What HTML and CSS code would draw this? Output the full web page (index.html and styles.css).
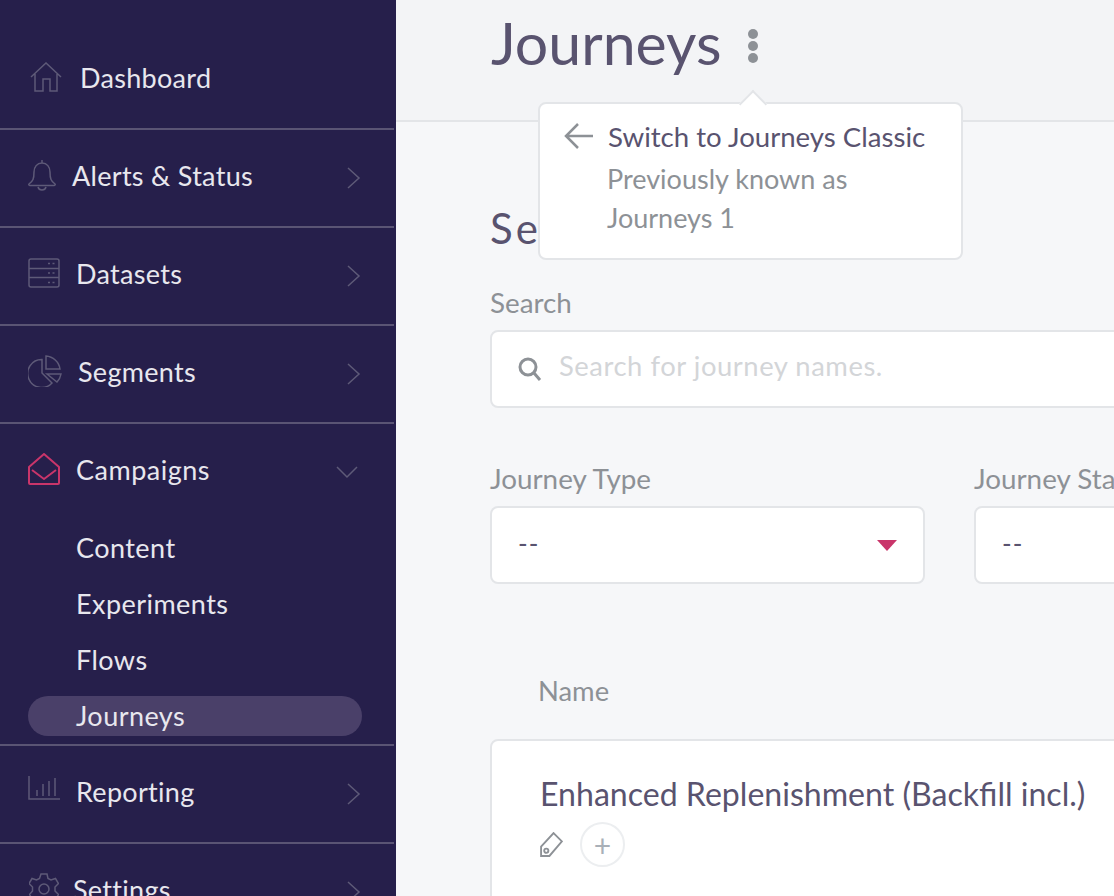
FILE: index.html
```html
<!DOCTYPE html>
<html lang="en">
<head>
    <meta charset="UTF-8">
    <title>Journeys</title>
    <link rel="stylesheet" href="styles.css">
</head>
<body>
    <div class="app">
        <nav class="sidebar">
            <a class="nav-row">
                <svg class="nav-icon icon-home" viewBox="0 0 32 30"><path d="M1 15 16 1l15 14M5 12v17h8V17h7v12h7V12"/></svg>
                <span class="nav-label">Dashboard</span>
            </a>
            <a class="nav-row">
                <svg class="nav-icon icon-bell" viewBox="0 0 28 32"><path d="M14 1v3M14 4c-5 0-8 4-8 9 0 7-1 9-5 12-.5.6 0 1.500 1 1.500h24c1 0 1.500-.9 1-1.500-4-3-5-5-5-12 0-5-3-9-8-9ZM10 28c1 4 7 4 8 0"/></svg>
                <span class="nav-label">Alerts &amp; Status</span>
                <svg class="chevron" viewBox="0 0 14 22"><path d="M1 1l11 10L1 21"/></svg>
            </a>
            <a class="nav-row">
                <svg class="nav-icon icon-data" viewBox="0 0 32 30"><rect x="1" y="1" width="30" height="28" rx="2"/><path d="M1 10.500h30M1 19.500h30"/><path class="dots" d="M20 5.500h2M24.500 5.500h2M20 15h2M24.500 15h2M20 24.500h2M24.500 24.500h2"/></svg>
                <span class="nav-label">Datasets</span>
                <svg class="chevron" viewBox="0 0 14 22"><path d="M1 1l11 10L1 21"/></svg>
            </a>
            <a class="nav-row">
                <svg class="nav-icon icon-pie" viewBox="0 0 34 32"><path d="M14 4.500A14 14 0 1 0 24 28l-10-10ZM18 1c7 .5 13 6 14 13H18ZM19 19h14c-.5 3-2 6-4 8Z"/></svg>
                <span class="nav-label">Segments</span>
                <svg class="chevron" viewBox="0 0 14 22"><path d="M1 1l11 10L1 21"/></svg>
            </a>
            <div class="nav-group">
                <a class="nav-row nav-row-open">
                    <svg class="nav-icon icon-mail" viewBox="0 0 32 32"><path d="M1 14 16 1l15 13v16a1 1 0 0 1-1 1H2a1 1 0 0 1-1-1ZM4 17l12 9 12-9"/></svg>
                    <span class="nav-label">Campaigns</span>
                    <svg class="chevron-down" viewBox="0 0 22 14"><path d="M1 1l10 10L21 1"/></svg>
                </a>
                <ul class="subnav">
                    <li>Content</li>
                    <li>Experiments</li>
                    <li>Flows</li>
                    <li class="active">Journeys</li>
                </ul>
            </div>
            <a class="nav-row">
                <svg class="nav-icon icon-report" viewBox="0 0 32 24"><path d="M1 0v23h31M9 20v-6M15 20V8M21 20V5M27 20V2"/></svg>
                <span class="nav-label">Reporting</span>
                <svg class="chevron" viewBox="0 0 14 22"><path d="M1 1l11 10L1 21"/></svg>
            </a>
            <a class="nav-row">
                <svg class="nav-icon icon-gear" viewBox="0 0 30 32"><circle cx="15" cy="16" r="5"/><path d="M12 1h6l1 4.500 3 1.500 4.500-1.500 3 5-3.500 3.500v4l3.500 3.500-3 5-4.500-1.500-3 1.500-1 4.500h-6l-1-4.500-3-1.500-4.500 1.500-3-5L3.500 18v-4L0 10.500l3-5L7.500 7l3-1.500Z"/></svg>
                <span class="nav-label">Settings</span>
                <svg class="chevron" viewBox="0 0 14 22"><path d="M1 1l11 10L1 21"/></svg>
            </a>
        </nav>

        <main class="main">
            <header class="page-header">
                <h1>Journeys</h1>
                <div class="kebab"><span></span><span></span><span></span></div>
            </header>

            <div class="popover">
                <div class="popover-title">
                    <svg class="back-arrow" viewBox="0 0 30 28"><path d="M29 14H2M14 2 2 14l12 12"/></svg>
                    <span>Switch to Journeys Classic</span>
                </div>
                <p>Previously known as<br>Journeys 1</p>
            </div>

            <section class="content">
                <h2>Search</h2>
                <label class="field-label">Search</label>
                <div class="input search-input">
                    <svg class="search-icon" viewBox="0 0 24 24"><circle cx="10" cy="10" r="8"/><path d="m16 16 6 7"/></svg>
                    <span class="placeholder">Search for journey names.</span>
                </div>

                <div class="filters">
                    <div>
                        <label class="field-label">Journey Type</label>
                        <div class="input select">
                            <span>--</span>
                            <i class="caret"></i>
                        </div>
                    </div>
                    <div>
                        <label class="field-label">Journey Status</label>
                        <div class="input select">
                            <span>--</span>
                            <i class="caret"></i>
                        </div>
                    </div>
                </div>

                <div class="table-head">Name</div>
                <div class="card">
                    <div class="card-title">Enhanced Replenishment (Backfill incl.)</div>
                    <div class="tags">
                        <svg class="tag-icon" viewBox="0 0 22 24"><path d="M13 1l8 8L9 23H1v-9Z"/><circle cx="6" cy="18" r="2"/></svg>
                        <span class="add-tag">+</span>
                    </div>
                </div>
            </section>
        </main>
    </div>
</body>
</html>
```

FILE: styles.css
```css
* {
    box-sizing: border-box;
}

html,
body {
    margin: 0;
    height: 100%;
    overflow: hidden;
}

body {
    font-family: Lato, "Open Sans", sans-serif;
    background-color: #f6f7f9;
}

.app {
    display: flex;
    width: 1114px;
    height: 896px;
    overflow: hidden;
}

/* Sidebar */
.sidebar {
    flex: 0 0 396px;
    padding: 32px 2px 0 0;
    background-color: #261f4b;
    color: #e8e7ee;
}

.nav-row {
    display: flex;
    align-items: center;
    height: 98px;
    padding: 0 0 2px 28px;
    font-size: 27px;
    letter-spacing: 0.3px;
    border-bottom: 2px solid #5a5474;
}

.nav-group {
    border-bottom: 2px solid #5a5474;
    height: 322px;
}

.nav-row-open {
    border-bottom: none;
    height: 94px;
    padding-bottom: 0;
    letter-spacing: 0.5px;
}

.nav-icon {
    flex: none;
    fill: none;
    stroke: #5e5a78;
    stroke-width: 1.5;
}

.icon-home { width: 32px; height: 30px; margin: -4px 18px 0 2px; }
.icon-bell { width: 28px; height: 32px; margin: -4px 16px 0 0; }
.icon-data { width: 32px; height: 30px; margin: -4px 16px 0 0; }
.icon-pie { width: 34px; height: 32px; margin: -4px 16px 0 0; }
.icon-mail { width: 32px; height: 32px; margin: -4px 16px 0 0; stroke: #c9356a; stroke-width: 2; stroke-linejoin: round; }
.icon-report { width: 32px; height: 24px; margin: -10px 16px 0 0; }
.icon-gear { width: 30px; height: 32px; margin: -4px 14px 0 1px; }

.nav-label {
    margin-top: -4px;
}

.chevron {
    width: 14px;
    height: 22px;
    margin: 2px 33px 0 auto;
    fill: none;
    stroke: #5e5a78;
    stroke-width: 1.5;
}

.chevron-down {
    width: 22px;
    height: 14px;
    margin: 4px 36px 0 auto;
    fill: none;
    stroke: #5e5a78;
    stroke-width: 1.5;
}

.subnav {
    list-style: none;
    margin: 0;
    padding: 2px 32px 0 28px;
    font-size: 27px;
    letter-spacing: 0.45px;
}

.subnav li {
    height: 56px;
    padding-left: 48px;
    line-height: 56px;
}

.subnav li.active {
    height: 40px;
    margin-top: 8px;
    line-height: 40px;
    border-radius: 20px;
    background-color: #4a4069;
}

/* Main area */
.main {
    position: relative;
    flex: 1;
    min-width: 0;
    overflow: hidden;
}

.page-header {
    display: flex;
    align-items: center;
    height: 122px;
    padding: 0 0 20px 95px;
    background-color: #f3f4f6;
    border-bottom: 2px solid #e3e5e8;
}

.page-header h1 {
    margin: -16px 0 0;
    font-size: 59px;
    font-weight: 400;
    color: #59536f;
}

.kebab {
    display: flex;
    flex-direction: column;
    gap: 2px;
    margin: -8px 0 0 27px;
}

.kebab span {
    width: 10px;
    height: 10px;
    border-radius: 50%;
    background-color: #8d9196;
}

.popover {
    position: absolute;
    left: 142px;
    top: 102px;
    width: 425px;
    height: 158px;
    padding: 16px 24px;
    background-color: #fff;
    border: 2px solid #e3e5e8;
    border-radius: 8px;
}

.popover::before {
    content: "";
    position: absolute;
    left: 203px;
    top: -10px;
    width: 18px;
    height: 18px;
    background-color: #fff;
    border-top: 2px solid #e3e5e8;
    border-left: 2px solid #e3e5e8;
    transform: rotate(45deg);
}

.popover-title {
    display: flex;
    align-items: center;
    gap: 14px;
    height: 32px;
    font-size: 27.6px;
    color: #59536f;
}

.back-arrow {
    flex: none;
    width: 30px;
    height: 28px;
    fill: none;
    stroke: #8d9196;
    stroke-width: 2.5;
}

.popover p {
    margin: 7px 0 0 43px;
    font-size: 27px;
    line-height: 39px;
    color: #8d9196;
}

.content {
    padding: 0 0 0 94px;
    width: 1200px;
}

.content h2 {
    margin: 83px 0 0;
    font-size: 42px;
    line-height: 46px;
    font-weight: 400;
    letter-spacing: 3px;
    color: #59536f;
}

.field-label {
    display: block;
    font-size: 27.8px;
    line-height: 34px;
    color: #8d9196;
}

.content h2 + .field-label {
    margin-top: 35px;
}

.input {
    display: flex;
    align-items: center;
    height: 78px;
    margin-top: 10px;
    padding: 0 28px 0 26px;
    background-color: #fff;
    border: 2px solid #e3e5e8;
    border-radius: 8px;
}

.search-icon {
    width: 24px;
    height: 24px;
    margin-right: 17px;
    fill: none;
    stroke: #8d9196;
    stroke-width: 3;
}

.placeholder {
    margin-top: -8px;
    font-size: 27.4px;
    letter-spacing: 0.55px;
    color: #d3d5d8;
}

.filters {
    display: grid;
    grid-template-columns: 435px 435px;
    gap: 49px;
    margin-top: 54px;
}

.select {
    justify-content: space-between;
    font-size: 26px;
    letter-spacing: 1px;
    color: #59536f;
}

.select span {
    margin-top: -4px;
}

.caret {
    width: 0;
    height: 0;
    margin-right: -2px;
    border-left: 10px solid transparent;
    border-right: 10px solid transparent;
    border-top: 11px solid #c9356a;
}

.table-head {
    margin-top: 90px;
    padding-left: 48px;
    font-size: 27.4px;
    line-height: 34px;
    color: #8d9196;
}

.card {
    height: 300px;
    margin-top: 31px;
    padding: 32px 48px;
    background-color: #fff;
    border: 2px solid #e3e5e8;
    border-radius: 8px;
}

.card-title {
    font-size: 32.1px;
    line-height: 42px;
    color: #59536f;
}

.tags {
    display: flex;
    align-items: center;
    gap: 17px;
    margin-top: 7px;
}

.tag-icon {
    width: 23px;
    height: 25px;
    fill: none;
    stroke: #8d9196;
    stroke-width: 1.8;
}

.add-tag {
    display: flex;
    align-items: center;
    justify-content: center;
    width: 45px;
    height: 45px;
    font-size: 30px;
    color: #a9b0b8;
    border: 2px solid #eceef0;
    border-radius: 50%;
}
```
